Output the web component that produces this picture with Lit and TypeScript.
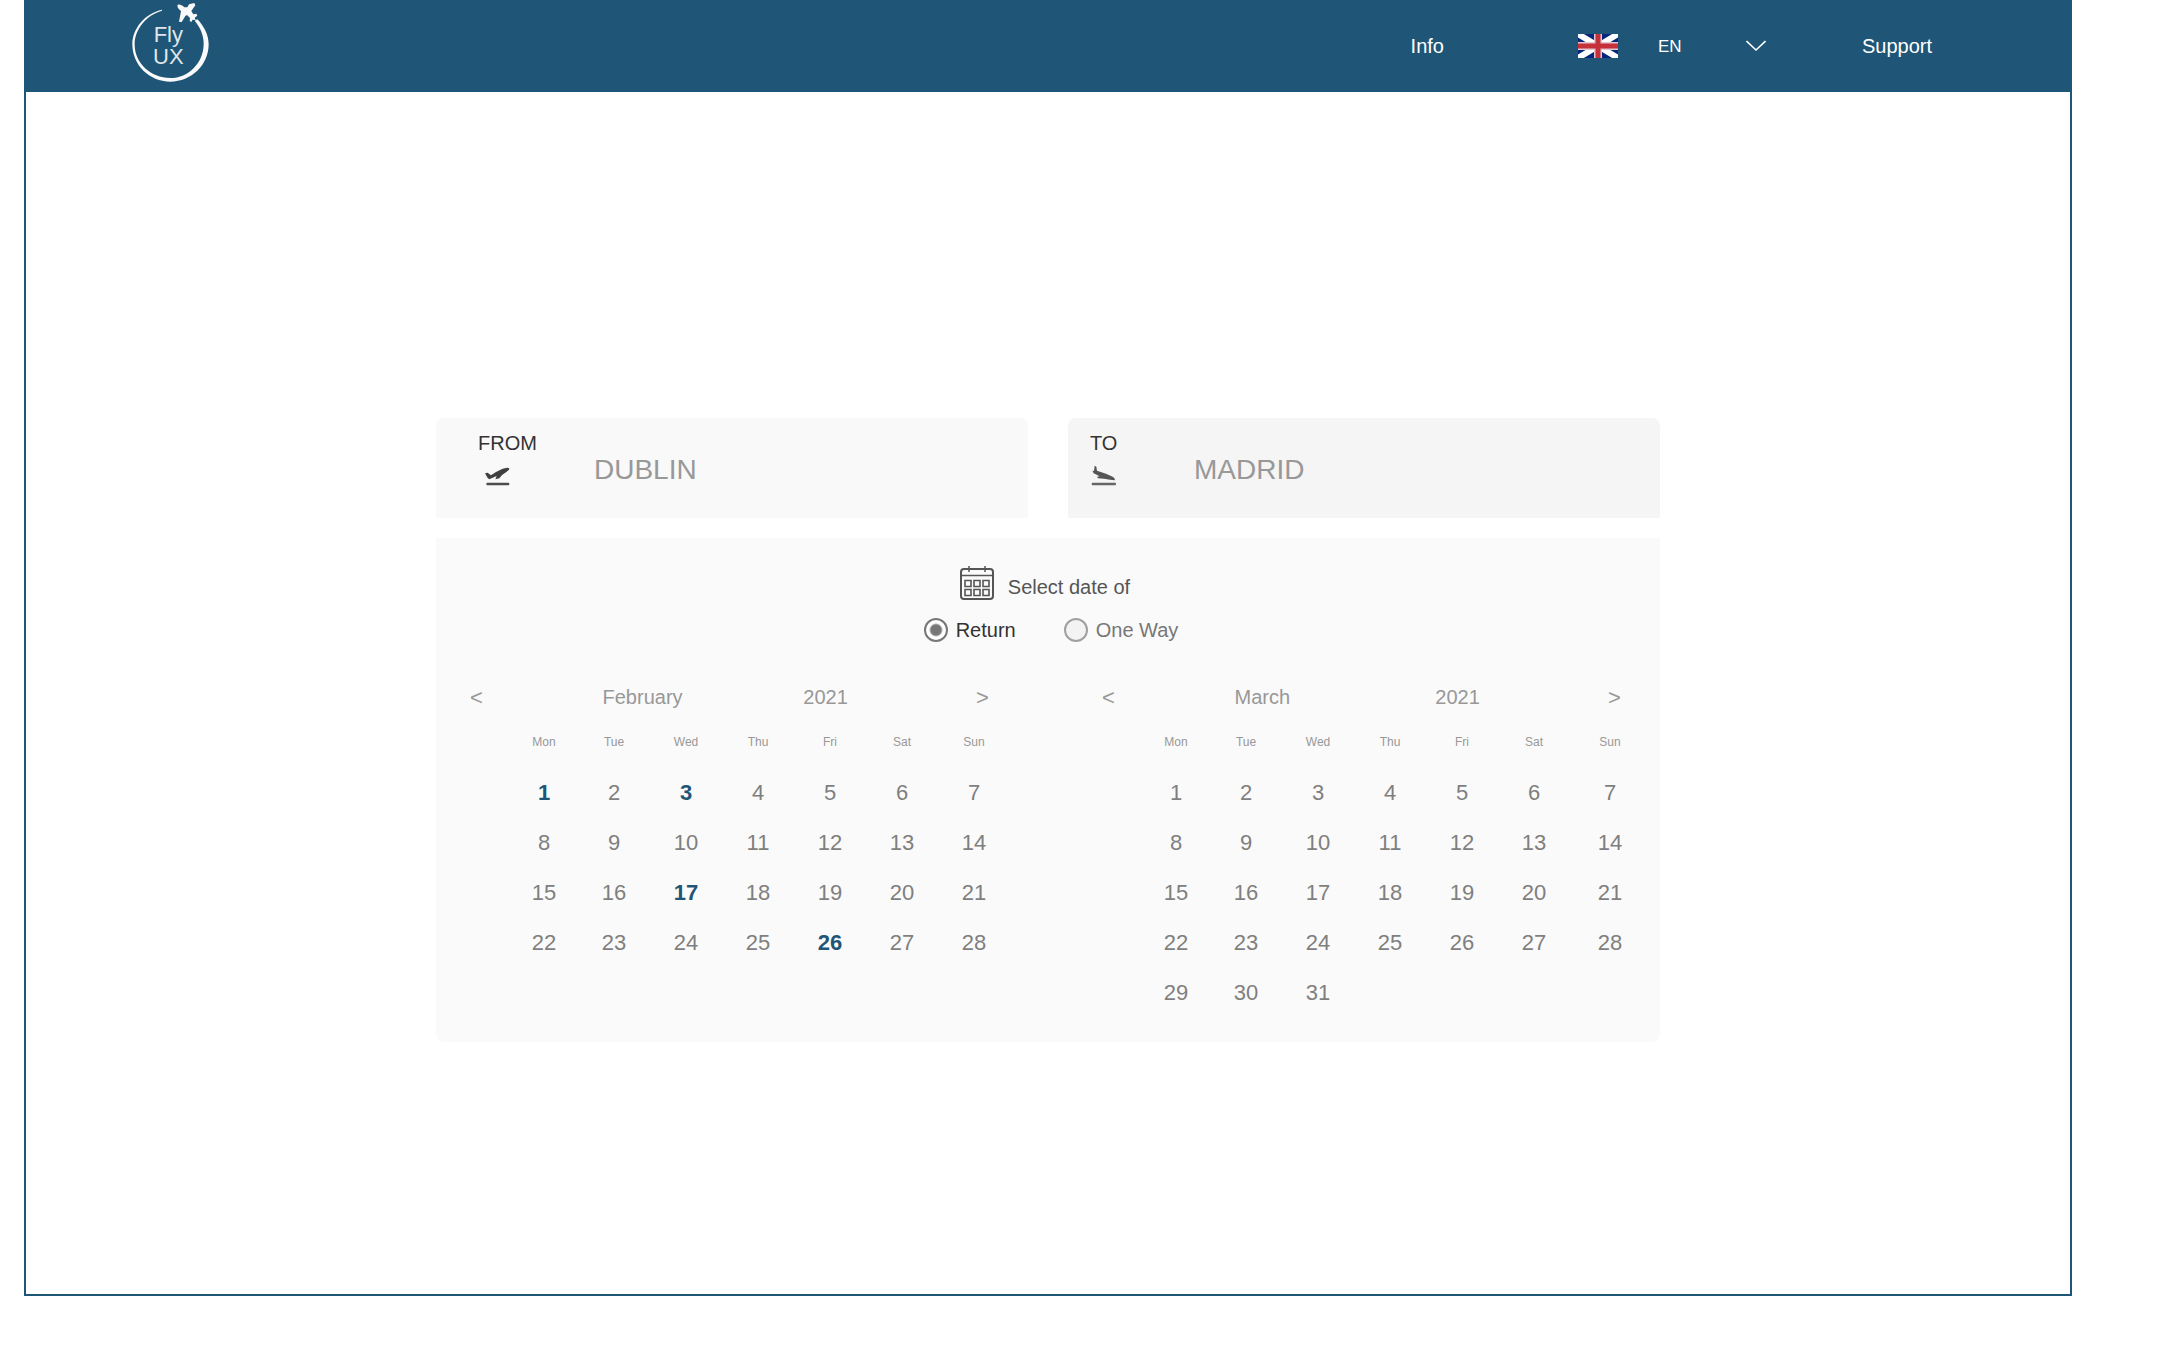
import { LitElement, html, css, svg } from "lit";
import { customElement, property, state } from "lit/decorators.js";
import { classMap } from "lit/directives/class-map.js";

const WEEKDAYS = ["Mon", "Tue", "Wed", "Thu", "Fri", "Sat", "Sun"];

const logo = html`
  <svg class="logo" viewBox="390 0 246 252" role="img" aria-label="Fly UX">
    <g fill="#fafafa">
      <path d="M486 29C435 40 397 85 397 133C397 195 448 245 511 245C574 245 626 195 626 133C626 105 612 78 592 58L584 62C602 83 611 108 611 131C611 188 566 234 511 234C452 234 404 190 404 133C404 88 438 46 486 32Z" />
      <path d="M532 17C533 11 544 13 553 22L562 22L567 13L583 9L586 16L574 33L580 43L589 41L592 47L584 53L587 60L578 59L574 66L569 63L570 54L561 45L556 48L545 66L537 65L541 44L543 33C537 28 532 22 532 17Z" />
    </g>
    <g class="logo-text" fill="#dfe6eb">
      <text x="461" y="125">Fly</text>
      <text x="459" y="193">UX</text>
    </g>
  </svg>
`;

const flag = html`
  <svg class="flag" viewBox="0 0 40 24" aria-hidden="true">
    <rect width="40" height="24" fill="#05287d" />
    <path d="M0 0L40 24M40 0L0 24" stroke="#fff" stroke-width="6" />
    <path d="M20 0V24M0 12H40" stroke="#e3c5ce" stroke-width="8" />
    <path d="M20 0V24M0 12H40" stroke="#c6303a" stroke-width="5" />
  </svg>
`;

const takeoff = svg`
  <path d="M29 143L37 141L47 149L62 139L82 129L95 126Q104 126 101 132L92 140L80 148L72 158L60 161L64 151L42 161L37 157Z" fill="#404040" />
  <rect x="33" y="171" width="69" height="8" rx="3" fill="#4c4c4c" />
`;

const landing = svg`
  <path d="M39 135L44 136L46 120L51 123L53 135L80 144L100 153Q109 159 106 164L92 162L74 159L56 158L53 153L61 152L43 143Z" fill="#555" />
  <rect x="37" y="171" width="73" height="8" rx="3" fill="#666" />
`;

const calendarIcon = html`
  <svg class="calendar-icon" viewBox="0 0 34 34" aria-hidden="true" fill="none" stroke="#555" stroke-width="2">
    <rect x="1" y="3" width="32" height="30" rx="3" />
    <path d="M1 9.5H33M9 0V6M25 0V6" stroke-width="1.5" />
    <path d="M5 14.5h6v6h-6zM14 14.5h6v6h-6zM23 14.5h6v6h-6zM5 23.5h6v6h-6zM14 23.5h6v6h-6zM23 23.5h6v6h-6z" stroke-width="1.6" />
  </svg>
`;

@customElement("fly-header")
export class FlyHeader extends LitElement {
  static styles = css`
    :host {
      display: flex;
      align-items: center;
      height: 92px;
      padding: 0 138px 0 104px;
      background: #1f5576;
      color: #fff;
      font-size: 20px;
      line-height: 24px;
    }
    .home {
      display: block;
      height: 84px;
      margin-bottom: 8px;
    }
    .logo {
      display: block;
      width: 82px;
      height: 84px;
    }
    .logo-text {
      font: 66px "Liberation Sans", Arial, sans-serif;
    }
    .nav {
      display: flex;
      align-items: center;
      margin-left: auto;
    }
    .link {
      color: inherit;
      text-decoration: none;
    }
    .language {
      display: grid;
      grid-template-columns: 40px 108px;
      column-gap: 40px;
      align-items: center;
      margin: 0 96px 0 134px;
    }
    .flag {
      width: 40px;
      height: 24px;
    }
    .picker {
      display: grid;
      align-items: center;
    }
    .select,
    .chevron {
      grid-area: 1 / 1;
    }
    .select {
      appearance: none;
      width: 100%;
      border: 0;
      padding: 2px 0 0;
      background: transparent;
      color: inherit;
      font: 17px/24px "Liberation Sans", Arial, sans-serif;
      cursor: pointer;
    }
    .chevron {
      justify-self: end;
      width: 20px;
      height: 12px;
      pointer-events: none;
    }
  `;

  render() {
    return html`
      <a class="home" href="#home">${logo}</a>
      <nav class="nav">
        <a class="link" href="#info">Info</a>
        <div class="language">
          ${flag}
          <div class="picker">
            <select class="select" aria-label="Language">
              <option>EN</option>
            </select>
            <svg class="chevron" viewBox="0 0 20 12" aria-hidden="true">
              <path d="M0.5 1L10 10L19.5 1" fill="none" stroke="#fff" stroke-width="1.6" />
            </svg>
          </div>
        </div>
        <a class="link" href="#support">Support</a>
      </nav>
    `;
  }
}

@customElement("airport-field")
export class AirportField extends LitElement {
  @property() label = "";
  @property() value = "";
  @property({ reflect: true }) kind: "from" | "to" = "from";

  static styles = css`
    :host {
      display: grid;
      grid-template-columns: 116px 1fr;
      height: 100px;
      padding-left: 42px;
      border-radius: 8px 8px 2px 2px;
      background: #f9f9f9;
    }
    :host([kind="to"]) {
      grid-template-columns: 104px 1fr;
      padding-left: 22px;
      background: #f5f5f5;
    }
    .label {
      padding-top: 13px;
      color: #333;
      font-size: 20px;
      line-height: 24px;
    }
    .icon {
      display: block;
      width: 28px;
      height: 22px;
      margin: 10px 0 0 6px;
    }
    :host([kind="to"]) .icon {
      margin-left: -2px;
    }
    .input {
      min-width: 0;
      border: 0;
      padding: 4px 0 0;
      outline: 0;
      background: transparent;
      color: #989898;
      font: 28px "Liberation Sans", Arial, sans-serif;
    }
  `;

  render() {
    return html`
      <label class="label" for="airport">
        ${this.label}
        <svg class="icon" viewBox="26 118 84 66" aria-hidden="true">${this.kind === "from" ? takeoff : landing}</svg>
      </label>
      <input class="input" id="airport" type="text" .value=${this.value} />
    `;
  }
}

@customElement("month-calendar")
export class MonthCalendar extends LitElement {
  @property() month = "";
  @property({ type: Number }) year = 2021;
  @property({ type: Number }) days = 28;
  @property({ attribute: false }) selected: number[] = [];
  @property({ type: Boolean, reflect: true }) wide = false;

  static styles = css`
    :host {
      display: block;
      padding: 0 18px 0 34px;
    }
    :host([wide]) {
      padding-right: 10px;
    }
    .head {
      display: grid;
      grid-template-columns: 132fr 200fr 172fr 13px;
      align-items: center;
      height: 40px;
      margin-right: 21px;
      color: #989898;
      font-size: 20px;
    }
    :host([wide]) .head {
      margin-right: 29px;
    }
    .step {
      justify-self: start;
      border: 0;
      padding: 2px 0 0;
      background: transparent;
      color: inherit;
      font: 22px/32px "Liberation Sans", Arial, sans-serif;
      cursor: pointer;
    }
    .grid {
      width: calc(100% - 40px);
      margin-left: 40px;
      border-collapse: collapse;
      table-layout: fixed;
    }
    .first {
      width: 68px;
    }
    .last {
      width: 72px;
    }
    :host([wide]) .last {
      width: 80px;
    }
    .weekday,
    .cell {
      height: 50px;
      padding: 0;
      text-align: center;
    }
    .weekday {
      color: #989898;
      font-size: 12px;
      font-weight: 400;
    }
    .day {
      border: 0;
      padding: 2px 0 0;
      width: 100%;
      height: 40px;
      background: transparent;
      color: #7f7f7f;
      font: 22px "Liberation Sans", Arial, sans-serif;
      cursor: pointer;
    }
    .day.selected {
      color: #1f5576;
      font-weight: 700;
    }
  `;

  private toggle(day: number) {
    this.selected = this.selected.includes(day)
      ? this.selected.filter((d) => d !== day)
      : [...this.selected, day];
  }

  private renderDay(day: number) {
    if (day > this.days) return html`<td class="cell"></td>`;
    const on = this.selected.includes(day);
    return html`
      <td class="cell">
        <button class=${classMap({ day: true, selected: on })} aria-pressed=${on} @click=${() => this.toggle(day)}>${day}</button>
      </td>
    `;
  }

  render() {
    const weeks = Array.from({ length: Math.ceil(this.days / 7) }, (_, w) => w * 7);
    return html`
      <div class="head">
        <button class="step" aria-label="Previous month">&lt;</button>
        <span>${this.month}</span>
        <span>${this.year}</span>
        <button class="step" aria-label="Next month">&gt;</button>
      </div>
      <table class="grid">
        <colgroup>
          <col class="first" /><col /><col /><col /><col /><col /><col class="last" />
        </colgroup>
        <thead>
          <tr>${WEEKDAYS.map((d) => html`<th class="weekday" scope="col">${d}</th>`)}</tr>
        </thead>
        <tbody>
          ${weeks.map((w) => html`<tr>${WEEKDAYS.map((_, i) => this.renderDay(w + i + 1))}</tr>`)}
        </tbody>
      </table>
    `;
  }
}

@customElement("app-root")
export class AppRoot extends LitElement {
  @state() private trip = "Return";

  static styles = css`
    :host {
      display: block;
      padding: 0 100px 68px 24px;
      background: #fff;
      font-family: "Liberation Sans", Arial, sans-serif;
    }
    .frame {
      border: 2px solid #1f5576;
      border-top: 0;
    }
    .main {
      padding: 326px 24px 252px;
    }
    .search {
      max-width: 1224px;
      margin: 0 auto;
    }
    .columns {
      display: grid;
      grid-template-columns: 1fr 1fr;
      column-gap: 40px;
    }
    .dates {
      margin-top: 20px;
      padding: 28px 0 25px;
      border-radius: 2px 2px 8px 8px;
      background: #fafafa;
    }
    .caption {
      display: flex;
      justify-content: center;
      align-items: flex-end;
      gap: 14px;
      padding-right: 6px;
      color: #555;
      font-size: 20px;
      line-height: 26px;
    }
    .calendar-icon {
      width: 34px;
      height: 34px;
    }
    .trips {
      display: flex;
      justify-content: center;
      gap: 48px;
      margin: 15px 0 32px;
      padding-left: 6px;
    }
    .trip {
      display: flex;
      align-items: center;
      gap: 8px;
      color: #777;
      font-size: 20px;
      line-height: 30px;
    }
    .trip.checked {
      color: #333;
    }
    .radio {
      appearance: none;
      box-sizing: border-box;
      width: 24px;
      height: 24px;
      margin: 0;
      border: 2px solid #a0a0a0;
      border-radius: 50%;
      background: #f3f3f3;
    }
    .radio:checked {
      border-color: #777;
      background: radial-gradient(circle, #777 0 5px, #fff 7px);
    }
  `;

  private renderTrip(name: string) {
    return html`
      <label class=${classMap({ trip: true, checked: this.trip === name })}>
        <input class="radio" type="radio" name="trip" .checked=${this.trip === name} @change=${() => (this.trip = name)} />
        ${name}
      </label>
    `;
  }

  render() {
    return html`
      <div class="frame">
        <fly-header></fly-header>
        <main class="main">
          <div class="search">
            <div class="columns">
              <airport-field kind="from" label="FROM" value="DUBLIN"></airport-field>
              <airport-field kind="to" label="TO" value="MADRID"></airport-field>
            </div>
            <section class="dates">
              <div class="caption">${calendarIcon}<span>Select date of</span></div>
              <div class="trips">${this.renderTrip("Return")}${this.renderTrip("One Way")}</div>
              <div class="columns">
                <month-calendar month="February" .days=${28} .selected=${[1, 3, 17, 26]}></month-calendar>
                <month-calendar month="March" .days=${31} wide></month-calendar>
              </div>
            </section>
          </div>
        </main>
      </div>
    `;
  }
}
